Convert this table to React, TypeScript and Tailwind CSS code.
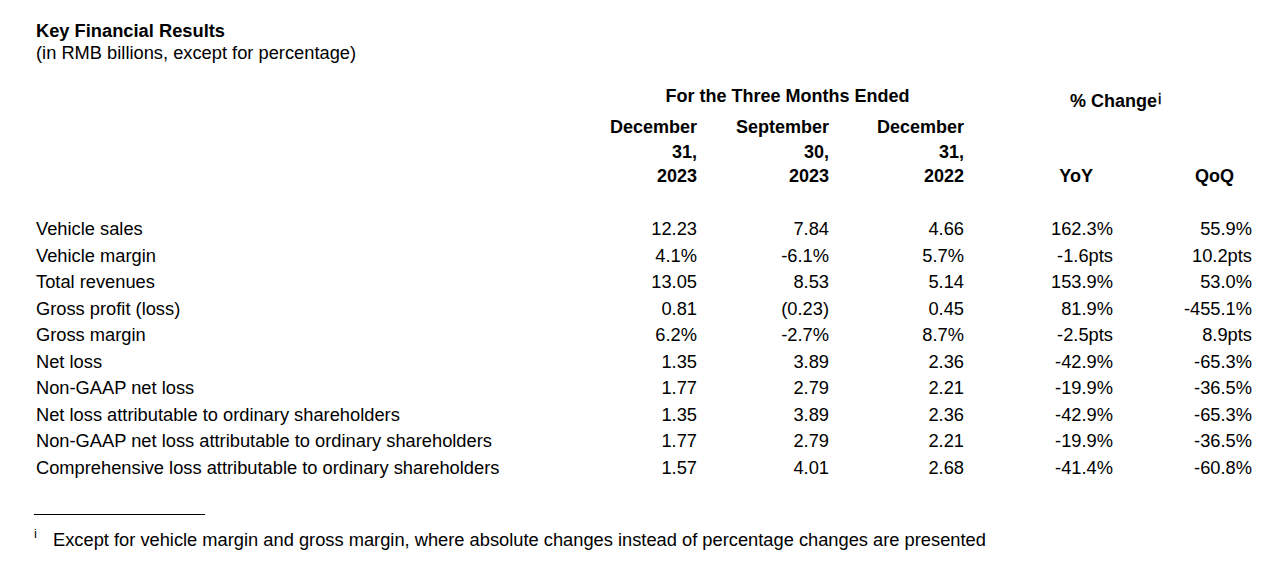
import React from "react";

const rows: [string, string, string, string, string, string][] = [
  ["Vehicle sales", "12.23", "7.84", "4.66", "162.3%", "55.9%"],
  ["Vehicle margin", "4.1%", "-6.1%", "5.7%", "-1.6pts", "10.2pts"],
  ["Total revenues", "13.05", "8.53", "5.14", "153.9%", "53.0%"],
  ["Gross profit (loss)", "0.81", "(0.23)", "0.45", "81.9%", "-455.1%"],
  ["Gross margin", "6.2%", "-2.7%", "8.7%", "-2.5pts", "8.9pts"],
  ["Net loss", "1.35", "3.89", "2.36", "-42.9%", "-65.3%"],
  ["Non-GAAP net loss", "1.77", "2.79", "2.21", "-19.9%", "-36.5%"],
  ["Net loss attributable to ordinary shareholders", "1.35", "3.89", "2.36", "-42.9%", "-65.3%"],
  ["Non-GAAP net loss attributable to ordinary shareholders", "1.77", "2.79", "2.21", "-19.9%", "-36.5%"],
  ["Comprehensive loss attributable to ordinary shareholders", "1.57", "4.01", "2.68", "-41.4%", "-60.8%"],
];

const grid = "grid grid-cols-[564px_97px_132px_135px_149px_139px]";

export default function App() {
  return (
    <div
      className="w-[1280px] h-[565px] bg-white text-black pl-[36px] pt-[20px] overflow-hidden"
      style={{ fontFamily: '"Liberation Sans", Arial, sans-serif' }}
    >
      <div className="text-[18.3px] leading-[22px] font-bold">Key Financial Results</div>
      <div className="text-[18.3px] leading-[22px]">(in RMB billions, except for percentage)</div>

      {/* header row 1 */}
      <div className={`${grid} mt-[21px] text-[18px] font-bold leading-[22px]`}>
        <div className="h-[22px]" />
        <div className="col-span-3 h-[22px] text-center pl-[11px]">For the Three Months Ended</div>
        <div className="col-span-2 h-[22px] pl-[106px] mt-[5px] whitespace-nowrap">
          % Change<span className="text-[15px] font-normal leading-[10px] align-[3px] ml-[1px] [-webkit-text-stroke:0.4px_black]">i</span>
        </div>
      </div>

      {/* header row 2 */}
      <div className={`${grid} mt-[3px] text-[18px] font-bold leading-[24.5px]`}>
        <div />
        <div className="text-right">December<br />31,<br />2023</div>
        <div className="text-right">September<br />30,<br />2023</div>
        <div className="text-right">December<br />31,<br />2022</div>
        <div className="text-right pr-[20px] self-end">YoY</div>
        <div className="text-right pr-[18px] self-end">QoQ</div>
      </div>

      {/* data */}
      <div className="mt-[27.5px] text-[18.3px]">
        {rows.map((r) => (
          <div key={r[0]} className={`${grid} h-[26.55px] leading-[26.55px]`}>
            <div className="whitespace-nowrap">{r[0]}</div>
            <div className="text-right">{r[1]}</div>
            <div className="text-right">{r[2]}</div>
            <div className="text-right">{r[3]}</div>
            <div className="text-right">{r[4]}</div>
            <div className="text-right">{r[5]}</div>
          </div>
        ))}
      </div>

      <div className="mt-[33px] -ml-[2px] w-[171px] h-px bg-black" />

      <div className="mt-[14px] -ml-[2px] flex text-[18.3px] leading-[22px]">
        <span className="w-[19px] text-[13px] leading-[12px] relative -top-[1px]">i</span>
        <span className="whitespace-nowrap">Except for vehicle margin and gross margin, where absolute changes instead of percentage changes are presented</span>
      </div>
    </div>
  );
}
